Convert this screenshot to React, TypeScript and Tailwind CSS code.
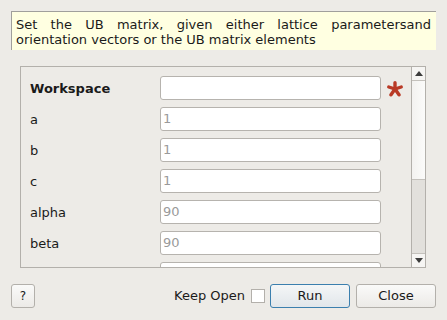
import React from "react";

const rows: { label: string; value: string; bold?: boolean }[] = [
  { label: "Workspace", value: "", bold: true },
  { label: "a", value: "1" },
  { label: "b", value: "1" },
  { label: "c", value: "1" },
  { label: "alpha", value: "90" },
  { label: "beta", value: "90" },
  { label: "", value: "" },
];

export default function App() {
  return (
    <div
      className="w-[447px] h-[320px] bg-[#edebe7] relative overflow-hidden text-[13px] text-[#1a1a1a]"
      style={{ fontFamily: '"DejaVu Sans", sans-serif' }}
    >
      <div className="pt-[11px] pl-[11px] pr-[11px]">
        <div className="h-[39px] border-t border-l border-[#a09f9c] bg-[#ffffe1] pl-[4px] pr-[5px] pt-[5px] leading-[15px] text-justify">
          Set the UB matrix, given either lattice parametersand orientation vectors or the UB matrix elements
        </div>
      </div>
      <div className="ml-[20px] mt-[16px] w-[406px] h-[202px] border border-[#b3b0ab] flex">
        <div className="flex-1 overflow-hidden pt-[9px]">
          {rows.map((r, i) => (
            <div key={i} className="flex items-center h-[24px] mb-[7px]">
              <div className={"w-[139px] pl-[9px] mt-[1px] " + (r.bold ? "font-bold" : "")}>{r.label}</div>
              <div className="w-[221px] h-[24px] bg-white border border-[#b6b3ae] rounded-[3px] pl-[2px] flex items-center text-[#9a9a9a]">
                {r.value}
              </div>
              {i === 0 && (
                <svg width="16" height="16" viewBox="0 0 16 16" className="ml-[6px] mt-[2px]">
                  <g stroke="#b93a26" strokeWidth="3.4" strokeLinecap="round">
                    <line x1="8" y1="1.8" x2="8" y2="8" />
                    <line x1="8" y1="8" x2="1.8" y2="6" />
                    <line x1="8" y1="8" x2="14.2" y2="6" />
                    <line x1="8" y1="8" x2="4" y2="13.8" />
                    <line x1="8" y1="8" x2="12" y2="13.8" />
                  </g>
                </svg>
              )}
            </div>
          ))}
        </div>
        <div className="w-[14px] border-l border-[#b3b0ab] flex flex-col bg-[#e2e0dc]">
          <div className="h-[14px] bg-[#f6f5f3] border-b border-[#c4c1bc] flex items-center justify-center">
            <svg width="8" height="5" viewBox="0 0 8 5"><polygon points="0,5 8,5 4,0" fill="#3c3c3c" /></svg>
          </div>
          <div className="h-[99px] bg-gradient-to-r from-[#f3f2f0] to-[#fbfbfa] border-b border-[#c4c1bc]" />
          <div className="flex-1" />
          <div className="h-[14px] bg-[#f6f5f3] border-t border-[#c4c1bc] flex items-center justify-center">
            <svg width="8" height="5" viewBox="0 0 8 5"><polygon points="0,0 8,0 4,5" fill="#3c3c3c" /></svg>
          </div>
        </div>
      </div>
      <div className="flex items-center mt-[16px] px-[11px] h-[24px]">
        <button className="w-[24px] h-[24px] border border-[#b3b0ab] rounded-[3px] bg-gradient-to-b from-[#fafaf9] to-[#eceae7] text-[12px] flex items-center justify-center">
          ?
        </button>
        <div className="flex-1" />
        <span className="mr-[6px]">Keep Open</span>
        <div className="w-[14px] h-[14px] bg-white border border-[#b3b0ab] mr-[5px]" />
        <button className="w-[80px] h-[24px] border border-[#3b7fae] rounded-[3px] bg-gradient-to-b from-[#f4f6f7] to-[#e1e6ea] flex items-center justify-center">
          Run
        </button>
        <button className="ml-[6px] w-[80px] h-[24px] border border-[#b3b0ab] rounded-[3px] bg-gradient-to-b from-[#fafaf9] to-[#eceae7] flex items-center justify-center">
          Close
        </button>
      </div>
    </div>
  );
}
